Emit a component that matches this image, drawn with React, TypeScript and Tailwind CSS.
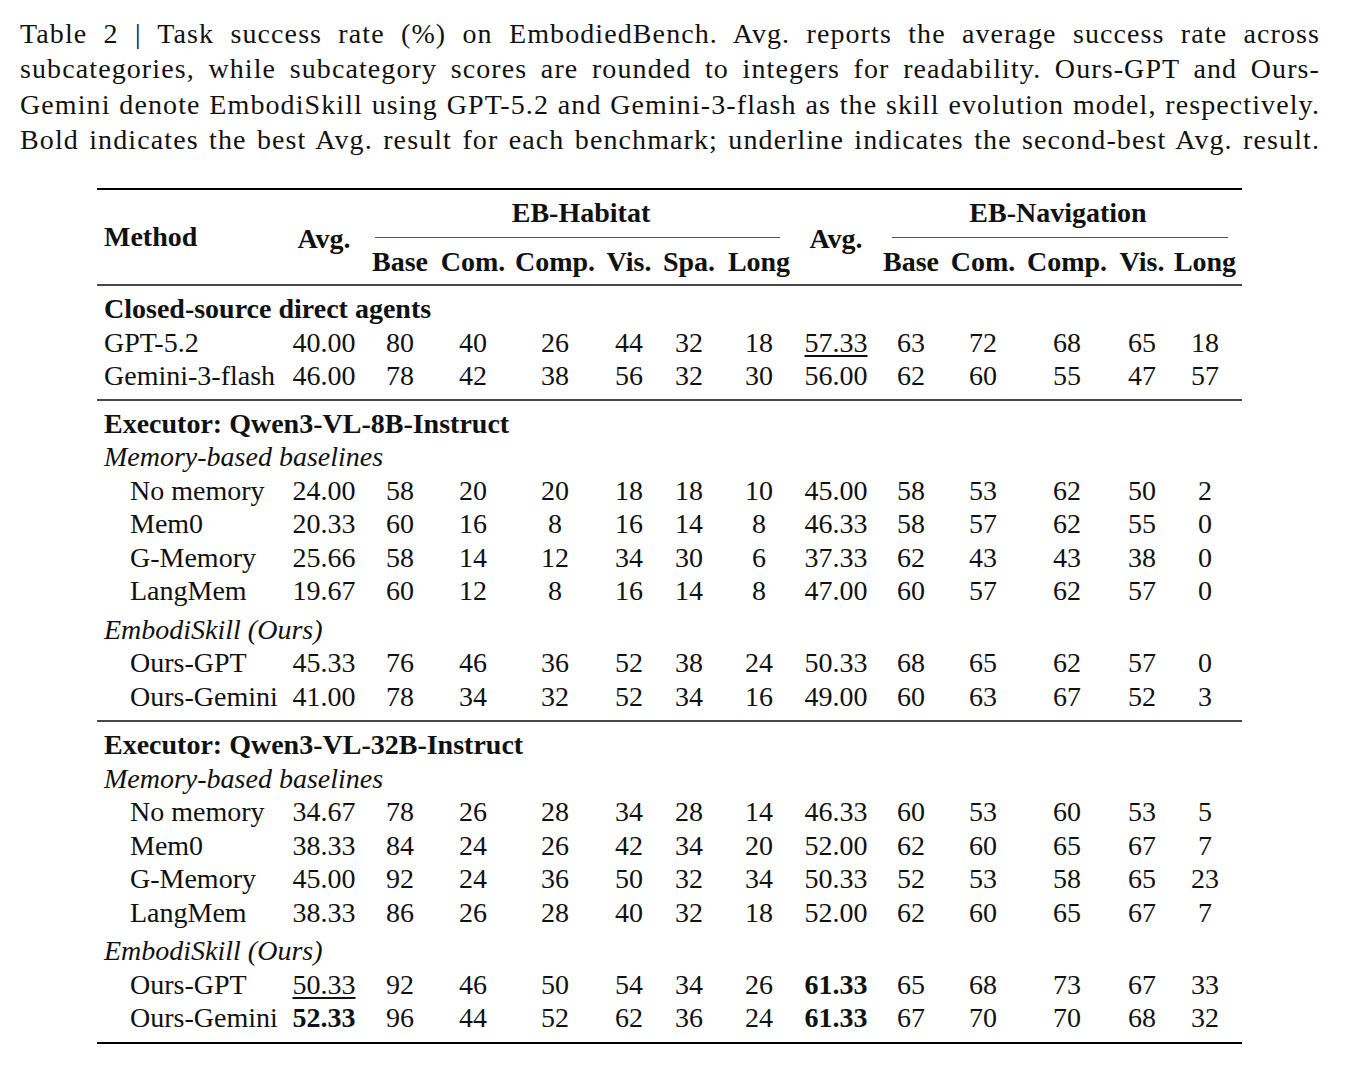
import React from "react";

// 14 columns: Method | Avg | 6 habitat | Avg | 5 navigation
const cols =
  "grid grid-cols-[187px_80px_72px_74px_90px_58px_62px_78px_76px_74px_70px_98px_52px_74px]";

type Cell = string | { v: string; b?: boolean; u?: boolean };
type Row = { name: string; indent?: boolean; cells: Cell[] };

const closedRows: Row[] = [
  { name: "GPT-5.2", cells: ["40.00", "80", "40", "26", "44", "32", "18", { v: "57.33", u: true }, "63", "72", "68", "65", "18"] },
  { name: "Gemini-3-flash", cells: ["46.00", "78", "42", "38", "56", "32", "30", "56.00", "62", "60", "55", "47", "57"] },
];

const base8: Row[] = [
  { name: "No memory", indent: true, cells: ["24.00", "58", "20", "20", "18", "18", "10", "45.00", "58", "53", "62", "50", "2"] },
  { name: "Mem0", indent: true, cells: ["20.33", "60", "16", "8", "16", "14", "8", "46.33", "58", "57", "62", "55", "0"] },
  { name: "G-Memory", indent: true, cells: ["25.66", "58", "14", "12", "34", "30", "6", "37.33", "62", "43", "43", "38", "0"] },
  { name: "LangMem", indent: true, cells: ["19.67", "60", "12", "8", "16", "14", "8", "47.00", "60", "57", "62", "57", "0"] },
];
const ours8: Row[] = [
  { name: "Ours-GPT", indent: true, cells: ["45.33", "76", "46", "36", "52", "38", "24", "50.33", "68", "65", "62", "57", "0"] },
  { name: "Ours-Gemini", indent: true, cells: ["41.00", "78", "34", "32", "52", "34", "16", "49.00", "60", "63", "67", "52", "3"] },
];

const base32: Row[] = [
  { name: "No memory", indent: true, cells: ["34.67", "78", "26", "28", "34", "28", "14", "46.33", "60", "53", "60", "53", "5"] },
  { name: "Mem0", indent: true, cells: ["38.33", "84", "24", "26", "42", "34", "20", "52.00", "62", "60", "65", "67", "7"] },
  { name: "G-Memory", indent: true, cells: ["45.00", "92", "24", "36", "50", "32", "34", "50.33", "52", "53", "58", "65", "23"] },
  { name: "LangMem", indent: true, cells: ["38.33", "86", "26", "28", "40", "32", "18", "52.00", "62", "60", "65", "67", "7"] },
];
const ours32: Row[] = [
  { name: "Ours-GPT", indent: true, cells: [{ v: "50.33", u: true }, "92", "46", "50", "54", "34", "26", { v: "61.33", b: true }, "65", "68", "73", "67", "33"] },
  { name: "Ours-Gemini", indent: true, cells: [{ v: "52.33", b: true }, "96", "44", "52", "62", "36", "24", { v: "61.33", b: true }, "67", "70", "70", "68", "32"] },
];

function DataRow({ row, extra = "" }: { row: Row; extra?: string }) {
  return (
    <div className={`${cols} leading-[33.5px] ${extra}`}>
      <div className={`whitespace-nowrap ${row.indent ? "pl-[33px]" : "pl-[7px]"}`}>{row.name}</div>
      {row.cells.map((c, i) => {
        const cell = typeof c === "string" ? { v: c } : c;
        return (
          <div key={i} className="text-center">
            <span
              className={`${cell.b ? "font-bold" : ""} ${
                cell.u ? "underline decoration-[1.5px] underline-offset-[3px]" : ""
              }`}
            >
              {cell.v}
            </span>
          </div>
        );
      })}
    </div>
  );
}

function Label({ text, kind, extra = "" }: { text: string; kind: "bold" | "italic"; extra?: string }) {
  return (
    <div className={`pl-[7px] leading-[33.5px] whitespace-nowrap ${kind === "bold" ? "font-bold" : "italic"} ${extra}`}>
      {text}
    </div>
  );
}

function Header() {
  const sub = "text-center font-bold pt-[7px] leading-[33.5px]";
  return (
    <div className={`${cols} pt-[6px] pb-[6px]`}>
      <div className="row-span-2 self-center pl-[7px] font-bold leading-[33.5px]">Method</div>
      <div className="row-span-2 self-center pt-[4px] text-center font-bold leading-[33.5px]">Avg.</div>
      <div className="col-span-6 text-center font-bold leading-[33.5px]">
        EB-Habitat
        <div className="mt-[7px] ml-[11px] mr-[18px] h-px bg-[#555]" />
      </div>
      <div className="row-span-2 self-center pt-[4px] text-center font-bold leading-[33.5px]">Avg.</div>
      <div className="col-span-5 text-center font-bold leading-[33.5px]">
        EB-Navigation
        <div className="mt-[7px] ml-[18px] mr-[14px] h-px bg-[#555]" />
      </div>
      {["Base", "Com.", "Comp.", "Vis.", "Spa.", "Long", "Base", "Com.", "Comp.", "Vis.", "Long"].map((h, i) => (
        <div key={i} className={sub}>
          {h}
        </div>
      ))}
    </div>
  );
}

function Executor({ title, base, ours }: { title: string; base: Row[]; ours: Row[] }) {
  return (
    <div className="pt-[6px] pb-[7px]">
      <Label text={title} kind="bold" />
      <Label text="Memory-based baselines" kind="italic" />
      {base.map((r) => (
        <DataRow key={r.name} row={r} />
      ))}
      <Label text="EmbodiSkill (Ours)" kind="italic" extra="pt-[5px]" />
      {ours.map((r) => (
        <DataRow key={r.name} row={r} />
      ))}
    </div>
  );
}

const caption = [
  "Table 2 | Task success rate (%) on EmbodiedBench.  Avg.  reports the average success rate across",
  "subcategories, while subcategory scores are rounded to integers for readability. Ours-GPT and Ours-",
  "Gemini denote EmbodiSkill using GPT-5.2 and Gemini-3-flash as the skill evolution model, respectively.",
  "Bold indicates the best Avg. result for each benchmark; underline indicates the second-best Avg. result.",
];

export default function App() {
  return (
    <div className="min-h-screen bg-white text-[#111] font-['Liberation_Serif','Times_New_Roman',serif]">
      <div className="w-[1348px] pt-[16px] pl-[20px]">
        <div className="w-[1300px] text-[28px] leading-[35.3px] tracking-[1.1px]">
          {caption.map((l, i) => (
            <div key={i} className="whitespace-nowrap text-justify [text-align-last:justify]">
              {l}
            </div>
          ))}
        </div>

        <div className="mt-[31px] ml-[77px] w-[1145px] text-[28px]">
          <div className="h-[2px] bg-black" />
          <Header />
          <div className="h-[2px] bg-[#484848]" />
          <div className="pt-[6px] pb-[6px]">
            <Label text="Closed-source direct agents" kind="bold" />
            {closedRows.map((r) => (
              <DataRow key={r.name} row={r} />
            ))}
          </div>
          <div className="h-[2px] bg-[#484848]" />
          <Executor title="Executor: Qwen3-VL-8B-Instruct" base={base8} ours={ours8} />
          <div className="h-[2px] bg-[#484848]" />
          <Executor title="Executor: Qwen3-VL-32B-Instruct" base={base32} ours={ours32} />
          <div className="h-[2px] bg-black" />
        </div>
      </div>
    </div>
  );
}
